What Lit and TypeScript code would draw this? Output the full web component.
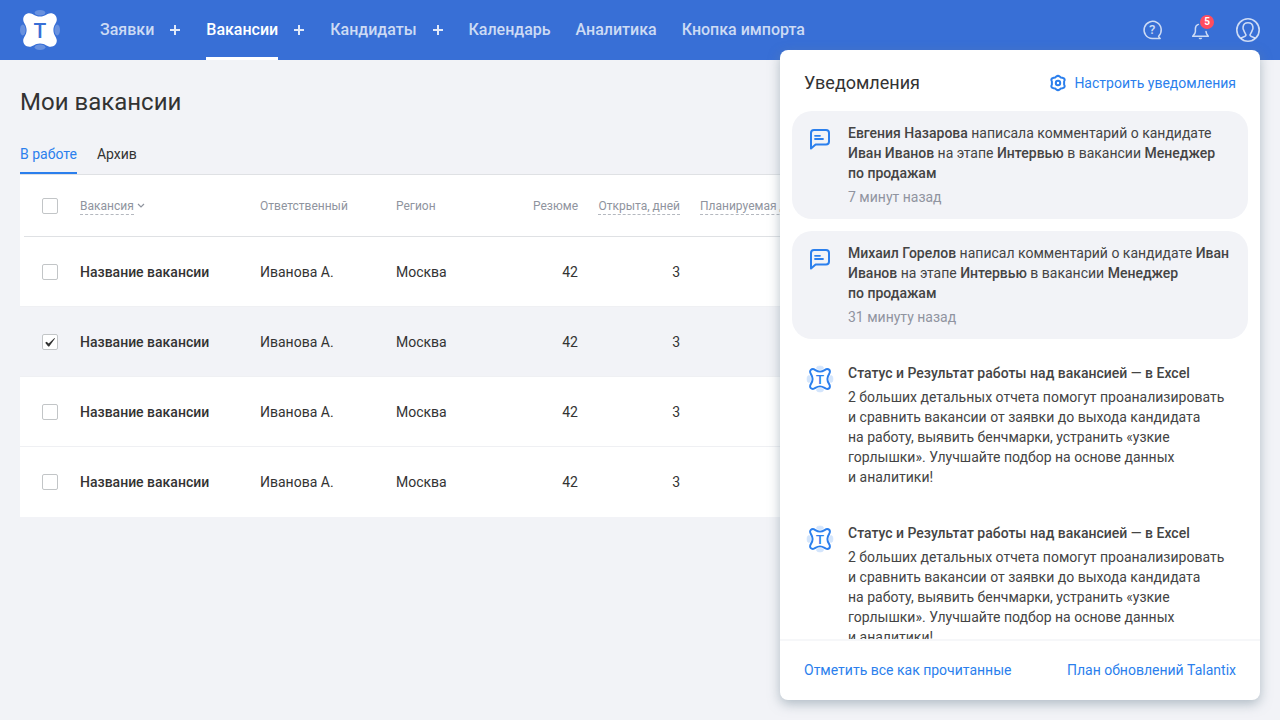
import { LitElement, html, svg, css, nothing } from "lit";
import { customElement, property } from "lit/decorators.js";

interface NavItem {
  label: string;
  addLabel?: string;
  active?: boolean;
}

interface Vacancy {
  name: string;
  owner: string;
  region: string;
  resumes: number;
  days: number;
  checked: boolean;
}

const NAV: NavItem[] = [
  { label: "Заявки", addLabel: "Добавить заявку" },
  { label: "Вакансии", addLabel: "Добавить вакансию", active: true },
  { label: "Кандидаты", addLabel: "Добавить кандидата" },
  { label: "Календарь" },
  { label: "Аналитика" },
  { label: "Кнопка импорта" },
];

const VACANCIES: Vacancy[] = [false, true, false, false].map((checked) => ({
  name: "Название вакансии",
  owner: "Иванова А.",
  region: "Москва",
  resumes: 42,
  days: 3,
  checked,
}));

const brandSolid =
  "M9.4 3.2C13 3.2 14.6 6.6 20 6.6S27 3.2 30.6 3.2C34.2 3.2 36.8 5.8 36.8 9.4C36.8 13 33.4 14.6 33.4 20S36.8 27 36.8 30.6C36.8 34.2 34.2 36.8 30.6 36.8C27 36.8 25.4 33.4 20 33.4S13 36.8 9.4 36.8C5.8 36.8 3.2 34.2 3.2 30.6C3.2 27 6.6 25.4 6.6 20S3.2 13 3.2 9.4C3.2 5.8 5.8 3.2 9.4 3.2Z";

const brandOutline =
  "M9 4.7C12.4 4.7 14 8.6 20 8.6S27.6 4.7 31 4.7C33.6 4.7 35.3 6.4 35.3 9C35.3 12.4 31.4 14 31.4 20S35.3 27.6 35.3 31C35.3 33.6 33.6 35.3 31 35.3C27.6 35.3 26 31.4 20 31.4S12.4 35.3 9 35.3C6.4 35.3 4.7 33.6 4.7 31C4.7 27.6 8.6 26 8.6 20S4.7 12.4 4.7 9C4.7 6.4 6.4 4.7 9 4.7Z";

const brandEars = svg`
  <ellipse cx="20" cy="2.8" rx="5.4" ry="2.8"/>
  <ellipse cx="20" cy="37.2" rx="5.4" ry="2.8"/>
  <ellipse cx="2.8" cy="20" rx="2.8" ry="5.4"/>
  <ellipse cx="37.2" cy="20" rx="2.8" ry="5.4"/>`;

@customElement("top-bar")
class TopBar extends LitElement {
  static styles = css`
    :host { display: block; background: #386fd6; color: #fff; }
    .bar { display: flex; align-items: center; height: 60px; padding: 0 20px; }
    .logo { display: block; width: 40px; height: 40px; margin-right: 40px; }
    .logo svg, .icon svg { display: block; }
    .ears { fill: #fff; opacity: 0.24; }
    .logo-shape { fill: #fff; }
    .logo-letter { fill: #386fd6; font: 500 21px Roboto, sans-serif; text-anchor: middle; }
    .nav { display: flex; flex: 1; gap: 25px; }
    .item { display: flex; align-items: center; gap: 14px; }
    .link {
      display: flex; align-items: center; box-sizing: border-box; height: 60px;
      border-top: 3px solid transparent; border-bottom: 3px solid transparent;
      color: rgba(255, 255, 255, 0.75); font-size: 16px; line-height: 24px;
      font-weight: 500; text-decoration: none; white-space: nowrap;
    }
    .link.active { color: #fff; border-bottom-color: #fff; }
    .add, .icon {
      display: block; padding: 0; border: 0; background: none; cursor: pointer;
      font-family: inherit; color: inherit;
    }
    .add { width: 13px; height: 14px; color: rgba(255, 255, 255, 0.85); }
    .add svg { display: block; }
    .tools { display: flex; gap: 24px; }
    .icon { position: relative; width: 24px; height: 24px; color: rgba(255, 255, 255, 0.75); }
    .mark { fill: currentColor; font: 500 13px Roboto, sans-serif; text-anchor: middle; }
    .badge {
      position: absolute; top: -3px; right: -2px; width: 14px; height: 14px;
      border-radius: 50%; background: #ff4d5e; color: #fff;
      font-size: 10px; line-height: 14px; font-weight: 700; text-align: center;
    }
  `;

  render() {
    return html`
      <header class="bar">
        <a class="logo" href="#" aria-label="Talantix">
          <svg width="40" height="40" viewBox="0 0 40 40">
            <g class="ears">${brandEars}</g>
            <path class="logo-shape" d=${brandSolid} />
            <text class="logo-letter" x="20" y="27.6">T</text>
          </svg>
        </a>
        <nav class="nav">
          ${NAV.map(
            (n) => html`<div class="item">
              <a class="link ${n.active ? "active" : ""}" href="#">${n.label}</a>
              ${n.addLabel
                ? html`<button class="add" aria-label=${n.addLabel}>
                    <svg width="14" height="14" viewBox="0 0 14 14" stroke="currentColor" stroke-width="2"><path d="M7 2v10M2 7h10" /></svg>
                  </button>`
                : nothing}
            </div>`
          )}
        </nav>
        <div class="tools">
          <button class="icon" aria-label="Помощь">
            <svg width="24" height="24" viewBox="0 0 24 24" fill="none" stroke="currentColor" stroke-width="1.5" stroke-linejoin="round">
              <path d="M18.6 18.2A8.6 8.6 0 1 0 12.2 20.6H20.2C19.5 20 18.9 19.2 18.6 18.2Z" />
              <text class="mark" stroke="none" x="12.2" y="16.4">?</text>
            </svg>
          </button>
          <button class="icon" aria-label="Уведомления">
            <svg width="24" height="24" viewBox="0 0 24 24" fill="none" stroke="currentColor" stroke-width="1.5" stroke-linejoin="round" stroke-linecap="round">
              <path d="M10.4 6.4C8.4 7 7.4 8.6 7.4 10.6V13.4C7.4 15.2 6.2 16.4 4.7 18.3H20.3C18.8 16.6 18 15.2 18 13.6" />
              <path d="M10.6 19.8C11 21.8 13.8 21.8 14.2 19.8Z" fill="currentColor" stroke="none" />
            </svg>
            <span class="badge">5</span>
          </button>
          <button class="icon" aria-label="Профиль">
            <svg width="24" height="24" viewBox="0 0 24 24" fill="none" stroke="currentColor" stroke-width="1.6" stroke-linejoin="round">
              <circle cx="12" cy="12" r="11.2" />
              <path d="M4.8 20.2C6.2 19 8.8 18.8 9.6 17.8C10.2 17 9.9 16.2 9 15C8.2 14 8.2 13.2 7.8 12.4C6.8 11.4 6.9 10.2 7.1 8.8C7.4 6.2 9.2 4.7 12 4.7S16.6 6.2 16.9 8.8C17.1 10.2 17.2 11.4 16.2 12.4C15.8 13.2 15.8 14 15 15C14.1 16.2 13.8 17 14.4 17.8C15.2 18.8 17.8 19 19.2 20.2" />
            </svg>
          </button>
        </div>
      </header>
    `;
  }
}

@customElement("vacancy-table")
class VacancyTable extends LitElement {
  static styles = css`
    :host { display: block; background: #fff; border-top: 1px solid #dfe1e4; }
    .table { width: 100%; table-layout: fixed; border-collapse: separate; border-spacing: 0; }
    .col-check { width: 60px; }
    .col-name { width: 180px; }
    .col-owner { width: 136px; }
    .col-region { width: 102px; }
    .col-resume { width: 82px; }
    .col-days { width: 102px; }
    th, td { padding: 0; text-align: left; white-space: nowrap; box-sizing: border-box; }
    .head {
      height: 62px; font-size: 12px; line-height: 16px; font-weight: 400; color: #8f949e;
      background: linear-gradient(#dfe1e4, #dfe1e4) right bottom / 100% 1px no-repeat;
    }
    .head.check { background-size: calc(100% - 4px) 1px; }
    .cell { height: 70px; font-size: 14px; line-height: 20px; color: #333; border-bottom: 1px solid #eff0f3; }
    .row:last-child .cell { border-bottom-color: transparent; }
    .selected .cell { background: #f2f3f7; }
    .name { font-weight: 500; }
    .num { text-align: right; padding-right: 2px; }
    .check { padding-left: 22px; }
    .planned { padding-left: 18px; }
    .sort {
      display: inline-block; margin: 0 0 -1px; padding: 0; border: 0; border-bottom: 1px dashed #b4b8bf;
      background: none; font: inherit; color: inherit; cursor: pointer;
    }
    .chevron { margin-left: 3px; vertical-align: 1px; }
    .box {
      display: block; appearance: none; width: 16px; height: 16px; margin: 0;
      border: 1px solid #c2c5c7; border-radius: 2px; background: #fff;
    }
    .box:checked {
      background: #fff url("data:image/svg+xml,%3Csvg xmlns='http://www.w3.org/2000/svg' viewBox='0 0 14 14'%3E%3Cpath d='M2.2 7.8L3.6 6.7L5.7 8.6L11.5 3L12 3.5L6.2 11.5H5.2Z' fill='%23333'/%3E%3C/svg%3E") center / 14px 14px no-repeat;
    }
  `;

  render() {
    return html`
      <table class="table">
        <colgroup>
          <col class="col-check" /><col class="col-name" /><col class="col-owner" />
          <col class="col-region" /><col class="col-resume" /><col class="col-days" /><col />
        </colgroup>
        <thead>
          <tr>
            <th class="head check"><input class="box" type="checkbox" aria-label="Выбрать все" /></th>
            <th class="head">
              <button class="sort">Вакансия</button><svg class="chevron" width="8" height="6" viewBox="0 0 8 6" fill="none" stroke="#8f949e" stroke-width="1.2"><path d="M1 1l3 3 3-3" /></svg>
            </th>
            <th class="head">Ответственный</th>
            <th class="head">Регион</th>
            <th class="head num">Резюме</th>
            <th class="head num"><button class="sort">Открыта, дней</button></th>
            <th class="head planned"><button class="sort">Планируемая дата</button></th>
          </tr>
        </thead>
        <tbody>
          ${VACANCIES.map(
            (v) => html`<tr class="row ${v.checked ? "selected" : ""}">
              <td class="cell check"><input class="box" type="checkbox" aria-label="Выбрать вакансию" .checked=${v.checked} /></td>
              <td class="cell name">${v.name}</td>
              <td class="cell">${v.owner}</td>
              <td class="cell">${v.region}</td>
              <td class="cell num">${v.resumes}</td>
              <td class="cell num">${v.days}</td>
              <td class="cell"></td>
            </tr>`
          )}
        </tbody>
      </table>
    `;
  }
}

@customElement("notice-card")
class NoticeCard extends LitElement {
  @property() kind: "comment" | "news" = "news";

  static styles = css`
    :host { display: block; }
    .card {
      display: flex; gap: 16px; padding: 12px 12px 12px 16px; border-radius: 20px;
      font-size: 14px; line-height: 20px; color: #444;
    }
    .comment { background: #f2f3f7; }
    .icon { flex: none; width: 24px; height: 24px; margin-top: 4px; overflow: visible; }
    .ears { fill: #d3e5fc; stroke: #d3e5fc; stroke-width: 1; }
    .shape { fill: #fff; stroke: #2b7fed; stroke-width: 3; }
    .letter { fill: #2b7fed; font: 500 21px Roboto, sans-serif; text-anchor: middle; }
    .body { flex: 1; min-width: 0; }
  `;

  render() {
    return html`
      <article class="card ${this.kind}">
        ${this.kind === "comment"
          ? html`<svg class="icon" viewBox="0 0 24 24" fill="none" stroke="#2b7fed" stroke-width="2" stroke-linejoin="round" stroke-linecap="round">
              <path d="M3 21.5V6a3 3 0 0 1 3-3H18a3 3 0 0 1 3 3V14.5a3 3 0 0 1-3 3H7.6Z" />
              <path d="M7 8.8H12M7 12H15" stroke-width="1.8" />
            </svg>`
          : html`<svg class="icon" viewBox="1.5 1.5 37 37">
              <g class="ears">${brandEars}</g>
              <path class="shape" d=${brandOutline} />
              <text class="letter" x="20" y="27.6">T</text>
            </svg>`}
        <div class="body"><slot></slot></div>
      </article>
    `;
  }
}

@customElement("notice-panel")
class NoticePanel extends LitElement {
  static styles = css`
    :host {
      display: flex; flex-direction: column; box-sizing: border-box; overflow: hidden;
      background: #fff; border-radius: 8px; color: #333;
      box-shadow: 0 4px 12px rgba(112, 134, 148, 0.5);
    }
    .top { display: flex; align-items: center; justify-content: space-between; padding: 20px 24px 16px; }
    .title { margin: 0; font-size: 18px; line-height: 25px; font-weight: 400; }
    .link {
      display: flex; align-items: center; gap: 8px; padding: 0; border: 0; background: none;
      font-family: inherit; font-size: 14px; line-height: 20px; color: #2b7fed;
      text-decoration: none; cursor: pointer;
    }
    .gear { overflow: visible; }
    .list {
      display: flex; flex: 1; flex-direction: column; gap: 12px; min-height: 0;
      padding: 0 12px; overflow-y: auto; scrollbar-width: none;
    }
    .card { flex: none; }
    .text { margin: 0; }
    .strong { font-weight: 500; }
    .time { margin: 4px 0 0; color: #9094a0; }
    .heading { margin: 0 0 4px; font-size: 14px; line-height: 20px; font-weight: 500; }
    .bottom { display: flex; align-items: center; justify-content: space-between; padding: 19px 24px 20px; border-top: 2px solid #f6f7f9; }
  `;

  render() {
    const news = html`
      <notice-card class="card" kind="news">
        <h3 class="heading">Статус и Результат работы над вакансией — в Excel</h3>
        <p class="text">2 больших детальных отчета помогут проанализировать и&nbsp;сравнить вакансии от заявки до выхода кандидата на&nbsp;работу, выявить бенчмарки, устранить «узкие горлышки». Улучшайте подбор на основе данных и&nbsp;аналитики!</p>
      </notice-card>`;
    return html`
      <div class="top">
        <h2 class="title">Уведомления</h2>
        <a class="link" href="#">
          <svg class="gear" width="16" height="16" viewBox="0 0 16 16" fill="none" stroke="#2b7fed" stroke-width="2" stroke-linejoin="round">
            <path d="M6.3 1.6Q8 0.2 9.7 1.6L10.8 2.5L12.3 2.7Q14.6 3.1 14.7 5L14.1 6.5V9.5L14.7 11Q14.6 12.9 12.3 13.3L10.8 13.5L9.7 14.4Q8 15.8 6.3 14.4L5.2 13.5L3.7 13.3Q1.4 12.9 1.3 11L1.9 9.5V6.5L1.3 5Q1.4 3.1 3.7 2.7L5.2 2.5Z" />
            <circle cx="8" cy="8" r="2.2" />
          </svg>
          Настроить уведомления
        </a>
      </div>
      <div class="list">
        <notice-card class="card" kind="comment">
          <p class="text"><b class="strong">Евгения Назарова</b> написала комментарий о кандидате <b class="strong">Иван Иванов</b> на этапе <b class="strong">Интервью</b> в вакансии <b class="strong">Менеджер по&nbsp;продажам</b></p>
          <p class="time">7 минут назад</p>
        </notice-card>
        <notice-card class="card" kind="comment">
          <p class="text"><b class="strong">Михаил Горелов</b> написал комментарий о кандидате <b class="strong">Иван Иванов</b> на этапе <b class="strong">Интервью</b> в вакансии <b class="strong">Менеджер по&nbsp;продажам</b></p>
          <p class="time">31 минуту назад</p>
        </notice-card>
        ${news}${news}
      </div>
      <div class="bottom">
        <button class="link">Отметить все как прочитанные</button>
        <a class="link" href="#">План обновлений Talantix</a>
      </div>
    `;
  }
}

@customElement("app-root")
class AppRoot extends LitElement {
  static styles = css`
    :host {
      display: block; position: relative; min-height: 100vh; background: #f2f3f7;
      color: #333; font-family: Roboto, sans-serif; font-size: 14px; line-height: 20px;
    }
    .main { padding: 26px 20px; }
    .title { margin: 0; font-size: 24px; line-height: 32px; font-weight: 400; }
    .tabs { display: flex; gap: 20px; margin-top: 16px; }
    .tab {
      padding: 10px 0 8px; border-bottom: 2px solid transparent;
      font-size: 14px; line-height: 20px; color: #333; text-decoration: none;
    }
    .tab.active { border-bottom-color: #2b7fed; color: #2b7fed; }
    .panel { position: absolute; top: 50px; right: 20px; bottom: 20px; width: 480px; }
  `;

  render() {
    return html`
      <top-bar></top-bar>
      <main class="main">
        <h1 class="title">Мои вакансии</h1>
        <nav class="tabs">
          <a class="tab active" href="#">В работе</a>
          <a class="tab" href="#">Архив</a>
        </nav>
        <vacancy-table></vacancy-table>
      </main>
      <notice-panel class="panel"></notice-panel>
    `;
  }
}
